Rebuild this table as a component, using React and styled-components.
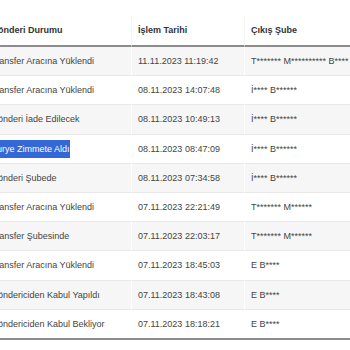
import React from "react";
import styled, { createGlobalStyle } from "styled-components";

const GlobalStyle = createGlobalStyle`
  html, body {
    margin: 0;
    padding: 0;
    background: #ffffff;
    overflow: hidden;
  }
  body {
    font-family: "Liberation Sans", Arial, sans-serif;
  }
`;

const Page = styled.div`
  width: 350px;
  height: 350px;
  overflow: hidden;
  padding-top: 16px;
  box-sizing: border-box;
`;

const Table = styled.table`
  margin-left: -15px;
  width: 470px;
  table-layout: fixed;
  border-collapse: separate;
  border-spacing: 0;
  font-size: 9px;
  color: #444;
  border-bottom: 2px solid #8c8c8c;
`;

const HeadCell = styled.th`
  text-align: left;
  vertical-align: bottom;
  font-weight: bold;
  color: #333;
  line-height: 13px;
  padding: 8px 6px;
  border-bottom: 2px solid #8c8c8c;
  border-left: ${(p) => (p.$first ? "none" : "1px solid #f4f4f4")};
  white-space: nowrap;
`;

const Row = styled.tr`
  background: ${(p) => (p.$striped ? "#f6f6f6" : "#ffffff")};
`;

const Cell = styled.td`
  height: 28.2px;
  padding: 0 6px;
  vertical-align: middle;
  line-height: 16px;
  border-top: ${(p) => (p.$top ? "none" : "1px solid #e8e8e8")};
  border-left: ${(p) => (p.$first ? "none" : "1px solid #ffffff")};
  white-space: nowrap;
  overflow: hidden;
`;

const Selected = styled.span`
  display: inline-block;
  background: #3468d6;
  color: #ffffff;
  line-height: 18px;
`;

const rows = [
  ["Transfer Aracına Yüklendi", "11.11.2023 11:19:42", "T******* M********** B****"],
  ["Transfer Aracına Yüklendi", "08.11.2023 14:07:48", "İ**** B******"],
  ["Gönderi İade Edilecek", "08.11.2023 10:49:13", "İ**** B******"],
  ["Kurye Zimmete Aldı", "08.11.2023 08:47:09", "İ**** B******", true],
  ["Gönderi Şubede", "08.11.2023 07:34:58", "İ**** B******"],
  ["Transfer Aracına Yüklendi", "07.11.2023 22:21:49", "T******* M******"],
  ["Transfer Şubesinde", "07.11.2023 22:03:17", "T******* M******"],
  ["Transfer Aracına Yüklendi", "07.11.2023 18:45:03", "E B****"],
  ["Göndericiden Kabul Yapıldı", "07.11.2023 18:43:08", "E B****"],
  ["Göndericiden Kabul Bekliyor", "07.11.2023 18:18:21", "E B****"],
];

export default function App() {
  return (
    <Page>
      <GlobalStyle />
      <Table>
        <colgroup>
          <col style={{ width: 146 }} />
          <col style={{ width: 113 }} />
          <col style={{ width: 211 }} />
        </colgroup>
        <thead>
          <tr>
            <HeadCell $first>Gönderi Durumu</HeadCell>
            <HeadCell>İşlem Tarihi</HeadCell>
            <HeadCell>Çıkış Şube</HeadCell>
          </tr>
        </thead>
        <tbody>
          {rows.map(([status, date, branch, selected], i) => (
            <Row key={i} $striped={i % 2 === 0}>
              <Cell $first $top={i === 0}>
                {selected ? <Selected>{status}</Selected> : status}
              </Cell>
              <Cell $top={i === 0}>{date}</Cell>
              <Cell $top={i === 0}>{branch}</Cell>
            </Row>
          ))}
        </tbody>
      </Table>
    </Page>
  );
}
